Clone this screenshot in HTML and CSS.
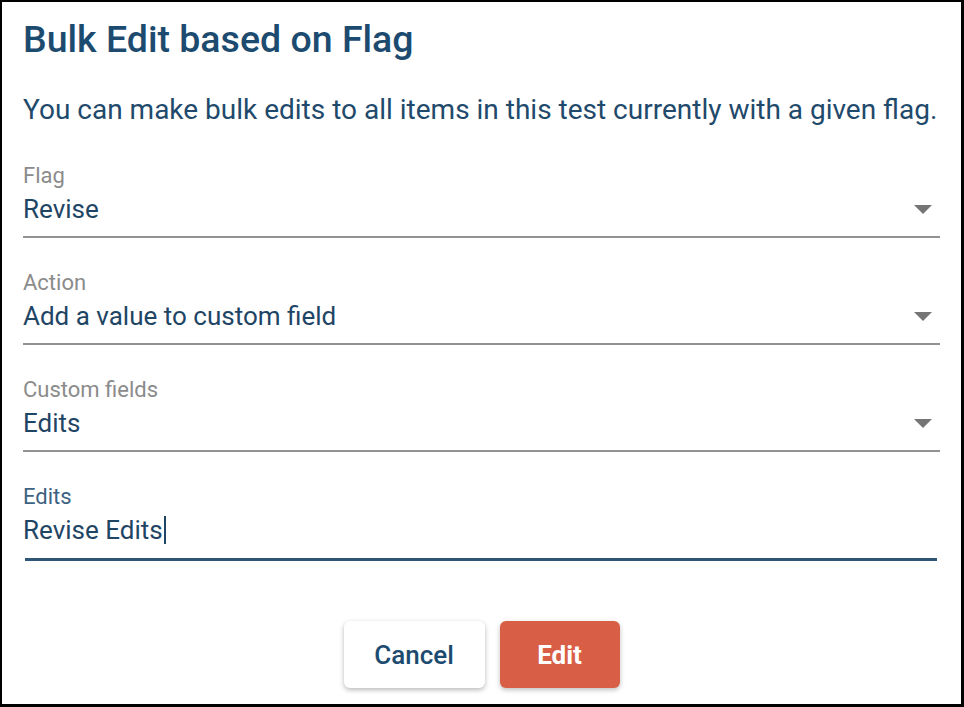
FILE: index.html
```html
<!DOCTYPE html>
<html lang="en">
<head>
<meta charset="utf-8">
<title>Bulk Edit based on Flag</title>
<link rel="stylesheet" href="styles.css">
</head>
<body>
<div class="dialog">
  <h1 class="title">Bulk Edit based on Flag</h1>
  <p class="desc">You can make bulk edits to all items in this test currently with a given flag.</p>

  <div class="field">
    <div class="label">Flag</div>
    <div class="value-row">
      <span class="value">Revise</span>
      <svg class="arrow" width="18" height="9" viewBox="0 0 18 9"><path d="M0 0 L18 0 L9 9 Z" fill="#757575"/></svg>
    </div>
  </div>

  <div class="field">
    <div class="label">Action</div>
    <div class="value-row">
      <span class="value">Add a value to custom field</span>
      <svg class="arrow" width="18" height="9" viewBox="0 0 18 9"><path d="M0 0 L18 0 L9 9 Z" fill="#757575"/></svg>
    </div>
  </div>

  <div class="field">
    <div class="label">Custom fields</div>
    <div class="value-row">
      <span class="value">Edits</span>
      <svg class="arrow" width="18" height="9" viewBox="0 0 18 9"><path d="M0 0 L18 0 L9 9 Z" fill="#757575"/></svg>
    </div>
  </div>

  <div class="field field-focused">
    <div class="label label-focused">Edits</div>
    <div class="value-row">
      <span class="value">Revise Edits<span class="caret"></span></span>
    </div>
    <div class="focus-line"></div>
  </div>

  <div class="actions">
    <button class="btn btn-cancel">Cancel</button>
    <button class="btn btn-edit">Edit</button>
  </div>
</div>
</body>
</html>
```

FILE: styles.css
```css
html, body {
  margin: 0;
  padding: 0;
  background: #ffffff;
}

body {
  font-family: Roboto, "Noto Sans", "Liberation Sans", sans-serif;
}

.dialog {
  box-sizing: border-box;
  width: 964px;
  height: 707px;
  border-style: solid;
  border-color: #000;
  border-width: 2px 3px 3px 2px;
  padding: 15px 21px 16px 21px;
  display: flex;
  flex-direction: column;
}

.title {
  margin: 0;
  font-size: 37.5px;
  line-height: 44px;
  font-weight: 500;
  color: #1d4b6f;
}

.desc {
  margin: 32px 0 0 0;
  font-size: 28px;
  line-height: 34px;
  font-weight: 400;
  color: #1f4a6b;
}

.field {
  margin-top: 32px;
  border-bottom: 2px solid #929292;
  padding-bottom: 11px;
}

.desc + .field {
  margin-top: 36px;
}

.label {
  font-size: 22px;
  line-height: 26px;
  color: #8b8b8b;
}

.label-focused {
  color: #3d6282;
}

.value-row {
  margin-top: 4px;
  display: flex;
  align-items: center;
  justify-content: space-between;
  height: 32px;
}

.value {
  font-size: 26px;
  line-height: 32px;
  color: #1f4565;
  display: inline-flex;
  align-items: center;
}

.arrow {
  margin-right: 8px;
  display: block;
}

.caret {
  display: inline-block;
  width: 2px;
  height: 28px;
  background: #1f4565;
  margin-left: 1px;
}

.field-focused {
  border-bottom: none;
  padding-bottom: 0;
}

.focus-line {
  margin: 12px 3px 0 2px;
  height: 3px;
  background: #2f5677;
}

.actions {
  margin-top: auto;
  display: flex;
  justify-content: center;
  gap: 15px;
}

.btn {
  font-family: Roboto, "Noto Sans", "Liberation Sans", sans-serif;
  font-size: 26px;
  font-weight: 500;
  height: 67px;
  border: none;
  border-radius: 6px;
  cursor: pointer;
}

.btn-cancel {
  width: 141px;
  background: #ffffff;
  color: #1d4b6f;
  box-shadow: 0 2px 5px rgba(0, 0, 0, 0.28);
}

.btn-edit {
  width: 120px;
  background: #d85f45;
  color: #ffffff;
  font-weight: 700;
  box-shadow: 0 2px 5px rgba(0, 0, 0, 0.25);
}
```
